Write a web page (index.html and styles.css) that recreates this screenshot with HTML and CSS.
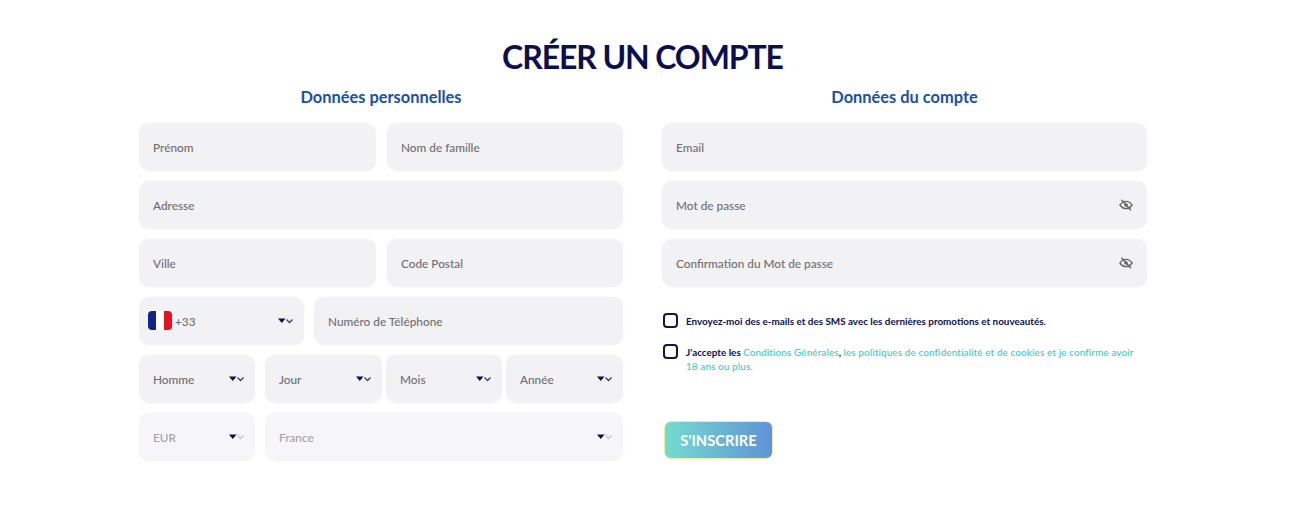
FILE: index.html
```html
<!DOCTYPE html>
<html lang="fr">
<head>
    <meta charset="UTF-8">
    <title>Créer un compte</title>
    <link rel="stylesheet" href="styles.css">
</head>
<body>
    <svg class="defs" width="0" height="0">
        <symbol id="arrow" viewBox="0 0 16 8">
            <path d="M0 1.500h7.500L3.800 6z" fill="#0c0f4e"/>
            <path d="M8.500 2.500l3 3 3-3" fill="none" stroke="currentColor" stroke-width="1.300"/>
        </symbol>
        <symbol id="eye" viewBox="0 0 14 12">
            <path d="M1 6c1.600-2.400 3.600-3.600 6-3.600S11.400 3.600 13 6c-1.600 2.400-3.600 3.600-6 3.600S2.600 8.400 1 6z" fill="none" stroke="#666" stroke-width="1.400"/>
            <circle cx="7" cy="6" r="1.800" fill="#666"/>
            <path d="M2.500 .8l9.500 10.400" stroke="#666" stroke-width="1.500"/>
        </symbol>
    </svg>

    <div class="page">
        <h1 class="title">CRÉER UN COMPTE</h1>
        <div class="columns">
            <!-- données personnelles -->
            <div class="col">
                <h2 class="subtitle">Données personnelles</h2>
                <div class="rows">
                    <div class="row two">
                        <div class="field">Prénom</div>
                        <div class="field">Nom de famille</div>
                    </div>
                    <div class="row">
                        <div class="field">Adresse</div>
                    </div>
                    <div class="row two">
                        <div class="field">Ville</div>
                        <div class="field">Code Postal</div>
                    </div>
                    <div class="row phone">
                        <div class="field select prefix">
                            <svg class="flag" viewBox="0 0 24 19">
                                <rect width="24" height="19" rx="4" fill="#fff"/>
                                <path d="M8 0H4a4 4 0 0 0-4 4v11a4 4 0 0 0 4 4h4z" fill="#14238a"/>
                                <path d="M16 0h4a4 4 0 0 1 4 4v11a4 4 0 0 1-4 4h-4z" fill="#e3141f"/>
                            </svg>
                            <span class="code">+33</span>
                            <svg class="arrow"><use href="#arrow"/></svg>
                        </div>
                        <div class="field">Numéro de Téléphone</div>
                    </div>
                    <div class="row birth">
                        <div class="field select">Homme<svg class="arrow"><use href="#arrow"/></svg></div>
                        <div class="field select">Jour<svg class="arrow"><use href="#arrow"/></svg></div>
                        <div class="field select">Mois<svg class="arrow"><use href="#arrow"/></svg></div>
                        <div class="field select">Année<svg class="arrow"><use href="#arrow"/></svg></div>
                    </div>
                    <div class="row country">
                        <div class="field select off">EUR<svg class="arrow"><use href="#arrow"/></svg></div>
                        <div class="field select off">France<svg class="arrow"><use href="#arrow"/></svg></div>
                    </div>
                </div>
            </div>
            <!-- données du compte -->
            <div class="col">
                <h2 class="subtitle">Données du compte</h2>
                <div class="rows">
                    <div class="row">
                        <div class="field">Email</div>
                    </div>
                    <div class="row">
                        <div class="field select">Mot de passe<svg class="eye"><use href="#eye"/></svg></div>
                    </div>
                    <div class="row">
                        <div class="field select">Confirmation du Mot de passe<svg class="eye"><use href="#eye"/></svg></div>
                    </div>
                </div>
                <div class="checks">
                    <label class="check">
                        <span class="box"></span>
                        <span class="label">Envoyez-moi des e-mails et des SMS avec les dernières promotions et nouveautés.</span>
                    </label>
                    <label class="check">
                        <span class="box"></span>
                        <span class="label">J'accepte les <a href="#">Conditions Générales</a>, <a href="#">les politiques de confidentialité et de cookies et je confirme avoir</a><br><a href="#">18 ans ou plus.</a></span>
                    </label>
                </div>
                <button class="submit">S'INSCRIRE</button>
            </div>
        </div>
    </div>
</body>
</html>
```

FILE: styles.css
```css
*{
    padding: 0;
    margin: 0;
    box-sizing: border-box;
}
body{
    background: #fff;
    font-family: Lato, "Noto Sans", sans-serif;
}
.defs{
    position: absolute;
}
.page{
    width: 1008px;
    height: 510px;
    margin-left: 139px;
    padding-top: 35px;
    overflow: hidden;
}
.title{
    font-size: 32px;
    line-height: 44px;
    font-weight: 700;
    letter-spacing: -1.1px;
    color: #0c0f4e;
    text-align: center;
    padding-right: 1px;
}
.columns{
    display: grid;
    grid-template-columns: 484px 485px;
    gap: 39px;
}
.subtitle{
    font-size: 16.4px;
    line-height: 22px;
    font-weight: 700;
    color: #1650ad;
    text-align: center;
    margin-top: 7px;
    margin-bottom: 15px;
}
.rows{
    display: flex;
    flex-direction: column;
    gap: 10px;
}
.row{
    display: grid;
    grid-template-columns: 1fr;
    height: 48px;
}
.two{
    grid-template-columns: 237px 236px;
    gap: 11px;
}
.phone{
    grid-template-columns: 165px 309px;
    gap: 10px;
}
.birth{
    grid-template-columns: 122px 117px 116px 117px;
    gap: 4px;
}
.birth .field:first-child{
    margin-right: 6px;
}
.country{
    grid-template-columns: 116px 358px;
    gap: 10px;
}
.field{
    display: flex;
    align-items: center;
    padding: 0 14px;
    background: #f2f1f3;
    border-radius: 10px;
    box-shadow: 0 0 2px rgba(235, 234, 238, 0.5);
    font-size: 11.8px;
    font-weight: 500;
    color: #6f6f72;
}
.select{
    justify-content: space-between;
}
.arrow{
    width: 16px;
    height: 8px;
    margin-right: -4px;
    margin-top: -1px;
    color: #3c3f5c;
}
.eye{
    width: 14px;
    height: 12px;
    margin-right: 0;
    margin-top: -1px;
}
.prefix{
    justify-content: flex-start;
    padding-left: 9px;
}
.flag{
    width: 24px;
    height: 19px;
    margin-top: -1px;
}
.code{
    margin-left: 3px;
}
.prefix .arrow{
    margin-left: auto;
}
.off{
    background: #f6f5f7;
    color: #a3a3a6;
}
.off .arrow{
    color: #c4c4c8;
}
.checks{
    margin-top: 26px;
    display: flex;
    flex-direction: column;
    gap: 16px;
}
.check{
    display: flex;
    gap: 8px;
    padding-left: 1px;
    font-size: 9.9px;
    line-height: 14px;
    font-weight: 700;
    color: #0c0f4e;
}
.label{
    padding-top: 1px;
}
.box{
    flex: none;
    width: 15px;
    height: 15px;
    border: 2px solid #12154f;
    border-radius: 4px;
}
.check a{
    color: #2fd1bb;
    text-decoration: none;
    font-weight: 500;
    letter-spacing: 0.13px;
}
.submit{
    display: block;
    width: 109px;
    height: 38px;
    margin: 48px 0 0 2px;
    border: 1.5px solid #f2ee9c;
    border-radius: 7px;
    background: linear-gradient(90deg, #73dcd0, #6092d6);
    color: #fff;
    font-family: inherit;
    font-size: 14.7px;
    font-weight: 700;
}
```
